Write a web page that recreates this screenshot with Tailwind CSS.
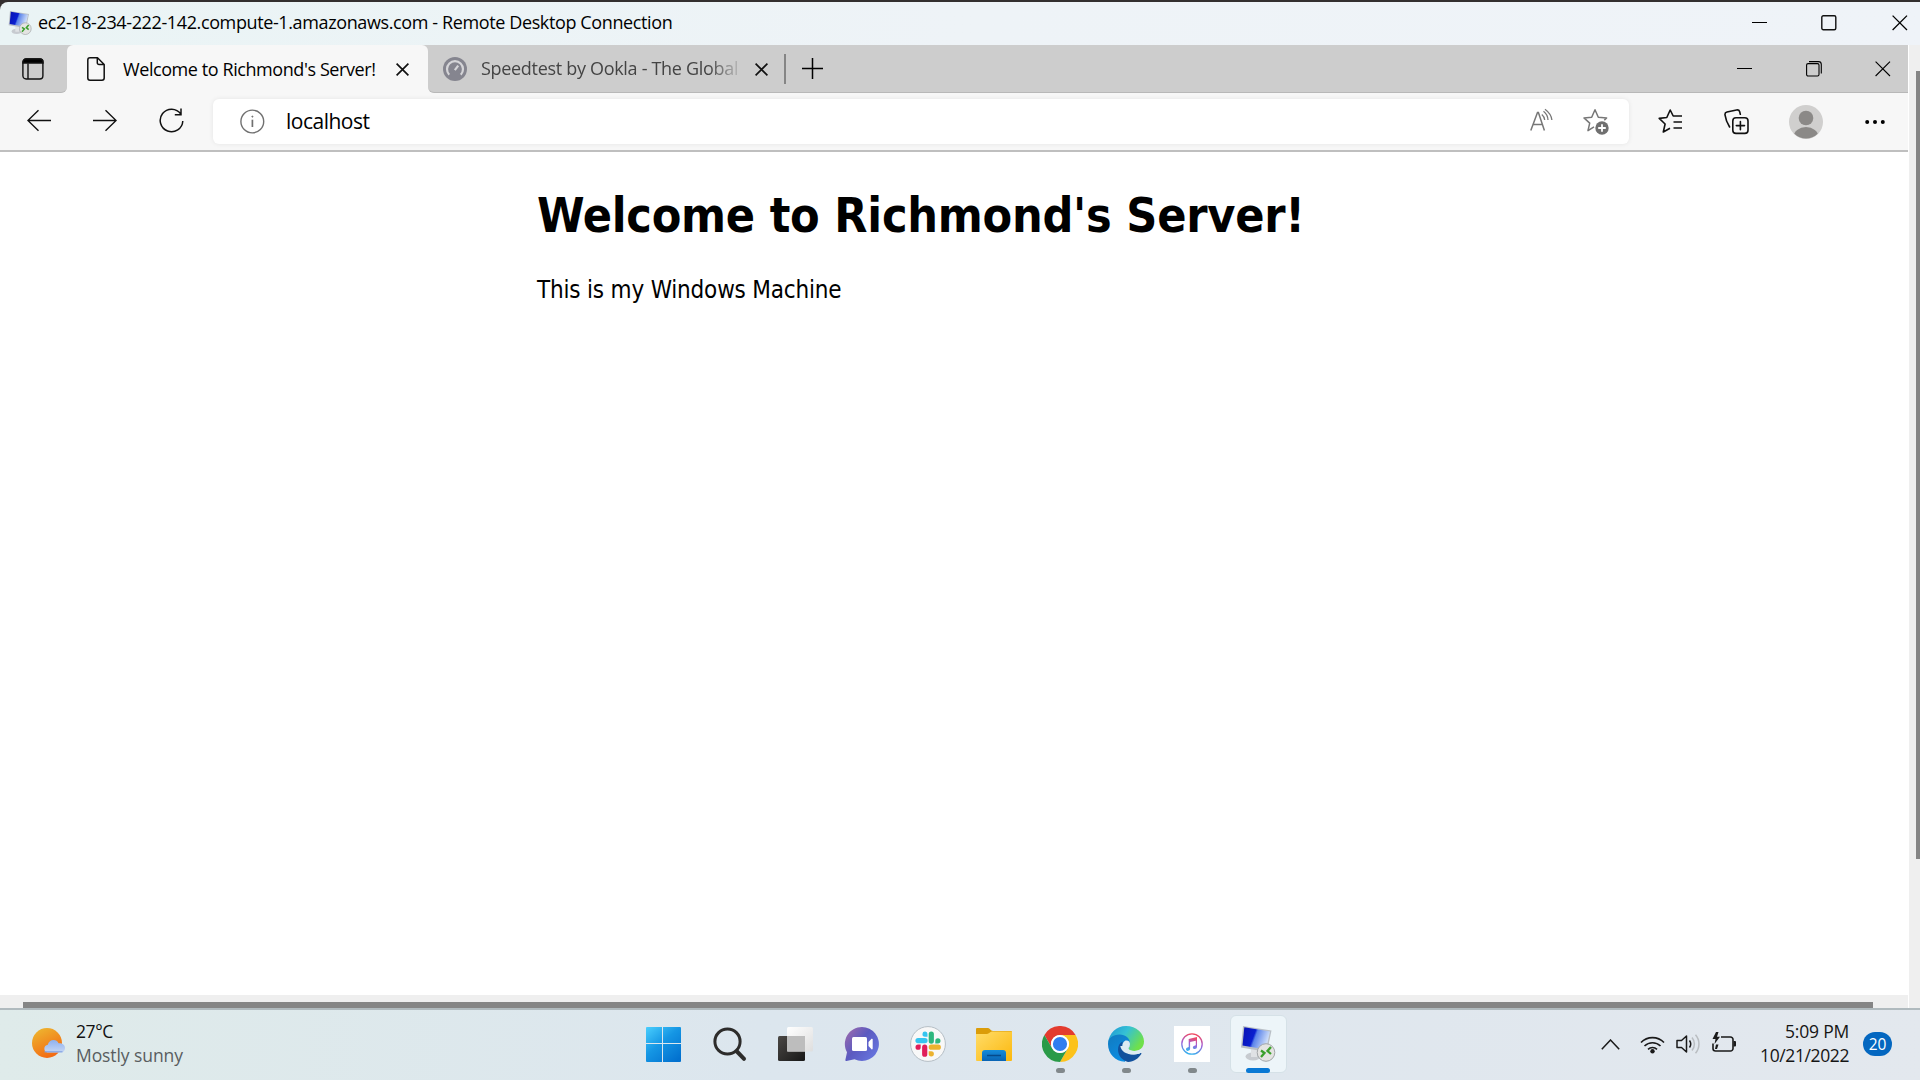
<!DOCTYPE html>
<html lang="en">
<head>
<meta charset="utf-8">
<title>Remote Desktop Connection</title>
<script src="https://cdn.jsdelivr.net/npm/@tailwindcss/browser@4"></script>
</head>
<body class="w-[1920px] h-[1080px] overflow-hidden bg-[#332f2f] font-['Open_Sans','Noto_Sans',sans-serif] text-black">
<div class="flex flex-col w-full h-full pt-[2px]">

  <!-- Remote desktop title bar -->
  <header class="flex items-center h-[43px] shrink-0 pl-[8px] pb-[2px] rounded-tl-lg bg-linear-to-r from-[#eaf4f5] via-[#eef3f7] to-[#eff3f8]">
    <svg class="w-6 h-6 shrink-0" viewBox="0 0 36 36"><use href="#rdp"/></svg>
    <span class="ml-[6px] pb-px text-[18px] leading-6 tracking-[-0.38px] whitespace-nowrap">ec2-18-234-222-142.compute-1.amazonaws.com - Remote Desktop Connection</span>
    <div class="flex items-center ml-auto mr-[12px]">
      <svg class="w-4 h-4" viewBox="0 0 16 16" fill="none" stroke="#000"><path d="M0 7.500H15"/></svg>
      <svg class="ml-[53px] w-4 h-4" viewBox="0 0 16 16" fill="none" stroke="#111" stroke-width="1.4"><rect x=".8" y=".8" width="14" height="14" rx="1.5"/></svg>
      <svg class="ml-[55px] w-4 h-4" viewBox="0 0 16 16" fill="none" stroke="#000" stroke-width="1.3"><path d="M.6.6 15 15M15 .6.6 15"/></svg>
    </div>
  </header>

  <div class="flex h-[963px] shrink-0 bg-[#efefef]">
    <div class="flex flex-col w-[1908px]">
      <!-- Tab strip -->
      <div class="flex h-12 shrink-0 bg-[#f7f7f7]">
        <div class="flex items-center w-[67px] pl-[22px] bg-[#cdcdcd] border-b border-[#b8b8b8] rounded-br-md">
          <svg class="w-[22px] h-[22px]" viewBox="0 0 22 22" fill="none" stroke="#111" stroke-width="1.4"><rect x=".9" y="1" width="20" height="20" rx="3.2"/><path d="M1 5V4a3 3 0 0 1 3-3h14a3 3 0 0 1 3 3v1z" fill="#000"/><path d="M6 5.500V21"/></svg>
        </div>
        <div class="bg-[#cdcdcd]">
          <div class="flex items-center w-[361px] h-12 pl-5 rounded-t-md bg-[#f7f7f7]">
            <svg class="w-[18px] h-6" viewBox="0 0 18 24" fill="none" stroke="#111" stroke-width="1.5" stroke-linejoin="round"><path d="M3 .8h7.500l6.700 6.700V21a2.200 2.200 0 0 1-2.200 2.200H3A2.200 2.200 0 0 1 .8 21V3A2.200 2.200 0 0 1 3 .8zM10.300.8v5a1.700 1.700 0 0 0 1.700 1.700h5.200"/></svg>
            <span class="ml-[18px] w-[255px] pb-px text-[18px] leading-6 tracking-[-0.42px] whitespace-nowrap">Welcome to Richmond's Server!</span>
            <svg class="ml-[18px] w-[13px] h-[13px] mt-px" viewBox="0 0 13 13" fill="none" stroke="#111" stroke-width="1.700"><path d="M.6.6l11.800 11.800M12.400.6.6 12.400"/></svg>
          </div>
        </div>
        <div class="flex grow items-center pl-[15px] bg-[#cdcdcd] border-b border-[#b8b8b8] rounded-bl-md">
          <svg class="w-6 h-6" viewBox="0 0 24 24"><circle cx="12" cy="12" r="12" fill="#85858f"/><path d="M6.200 17.700a8 8 0 1 1 11.600 0" fill="none" stroke="#d5d5d8" stroke-width="2.200"/><path d="M11.800 13.200 15.200 8.600" stroke="#d5d5d8" stroke-width="2.200"/></svg>
          <span class="ml-[14px] w-[258px] pb-px text-[18px] leading-6 tracking-[-0.31px] whitespace-nowrap text-[#444] mask-r-from-[88%] mask-r-to-[102%]">Speedtest by Ookla - The Global</span>
          <svg class="ml-4 w-[13px] h-[13px] mt-px" viewBox="0 0 13 13" fill="none" stroke="#111" stroke-width="1.700"><path d="M.6.6l11.800 11.800M12.400.6.6 12.400"/></svg>
          <div class="ml-[16px] w-[2px] h-[30px] bg-[#858585]"></div>
          <svg class="ml-4 w-[21px] h-[21px]" viewBox="0 0 21 21" stroke="#000" stroke-width="1.500"><path d="M10.500 0v21M0 10.500h21"/></svg>
          <div class="flex items-center ml-auto mr-[17px] gap-[53px]">
            <svg class="w-4 h-4" viewBox="0 0 16 16" stroke="#000"><path d="M0 7.500h15"/></svg>
            <svg class="w-4 h-4" viewBox="0 0 16 16" fill="none" stroke="#000" stroke-width="1.100"><rect x=".6" y="2.600" width="12.400" height="12.400" rx="1.500"/><path d="M3 .6h9.500a2.800 2.800 0 0 1 2.800 2.800V12.600"/></svg>
            <svg class="w-4 h-4" viewBox="0 0 16 16" stroke="#000" stroke-width="1.100"><path d="M.6.6 15 15M15 .6.6 15"/></svg>
          </div>
        </div>
      </div>

      <!-- Toolbar -->
      <div class="flex items-center h-[59px] shrink-0 pl-[27px] bg-[#f7f7f7] border-b-2 border-[#bfbfbf]">
        <svg class="w-6 h-6 mb-[2px]" viewBox="0 0 24 24" fill="none" stroke="#111" stroke-width="1.400"><path d="M24 11.500H.8M11.500 1.200.9 11.500l10.600 10.300"/></svg>
        <svg class="ml-[42px] w-6 h-6 mb-[2px]" viewBox="0 0 24 24" fill="none" stroke="#111" stroke-width="1.400"><path d="M0 11.500h23.200M12.500 1.200l10.600 10.300-10.600 10.300"/></svg>
        <svg class="ml-[42px] w-[25px] h-[26px] mb-px" viewBox="0 0 25 26" fill="none" stroke="#111" stroke-width="1.500"><path d="M21.800 6A11.300 11.300 0 1 0 23.800 13M22 .5v6.200h-6.200"/></svg>
        <div class="flex items-center ml-[29px] w-[1416px] h-[45px] pl-[27px] pr-[20px] rounded-md bg-white shadow-[0_0_5px_rgba(0,0,0,0.08)]">
          <svg class="w-[25px] h-[25px]" viewBox="0 0 25 25" fill="none" stroke="#707070" stroke-width="1.400"><circle cx="12.300" cy="12.500" r="11.400"/><path d="M12.400 10.700v7.300" stroke-width="1.700"/><circle cx="12.400" cy="7.600" r=".6" fill="#707070" stroke-width=".8"/></svg>
          <span class="ml-[21px] pb-[2px] text-[21px] leading-7 tracking-[-0.5px] whitespace-nowrap">localhost</span>
          <svg class="ml-auto w-[23px] h-[24px] mb-[3px]" viewBox="0 0 23 24" fill="none" stroke="#777" stroke-width="1.500"><path d="M.8 22.500 7.500 4.500h.9l6 18M3.200 16.500h9.300"/><path d="M11.800 6.500c1.800 1.500 2.700 3.300 2.900 5.500M13.500 3.300c2.800 2.200 4.300 5 4.500 8.700M15 1.200c4 3 6.500 6.500 6.900 10.800" stroke-width="1.300"/></svg>
          <svg class="ml-[30px] w-[26px] h-[27px]" viewBox="0 0 26 27" fill="none" stroke="#777" stroke-width="1.500" stroke-linejoin="round"><path d="M11 18.800 5 22.700l1.700-7.600L1 9.900l7.700-.7L12 1.800l3.300 7.400 8.300.7-2.300 2.300"/><circle cx="19" cy="20" r="6.700" fill="#707070" stroke="none"/><path d="M19 16.200v7.600M15.200 20h7.600" stroke="#fff" stroke-width="1.800"/></svg>
        </div>
        <svg class="ml-[29px] w-[25px] h-[26px] mb-px" viewBox="0 0 25 26" fill="none" stroke="#111" stroke-width="1.600" stroke-linejoin="round"><path d="M12 20.200 5.300 24l1.800-8L1.200 10.400l7.600-.9L12.200 2l3 6H24M15.500 14H24M15.500 20H24"/></svg>
        <svg class="ml-[41px] w-[25px] h-[26px]" viewBox="0 0 25 26" fill="none" stroke="#111" stroke-width="1.600" stroke-linecap="round"><rect x="8.800" y="8.800" width="15.200" height="15.600" rx="3.200"/><path d="M16.400 12.500v8.200M12.300 16.600h8.200M5.600 18C3.500 14.500 1.500 9.500 1 5.800c-.2-1.600.5-2.400 2-2.800L12.500 1c1.500-.3 2.700.2 3.200 1.800l.6 2.500"/></svg>
        <svg class="ml-[40px] w-[34px] h-[34px]" viewBox="0 0 34 34"><defs><clipPath id="pc"><circle cx="17" cy="17" r="16.500"/></clipPath></defs><circle cx="17" cy="17" r="17" fill="#d0cfce"/><circle cx="17" cy="13" r="7.300" fill="#8b8987"/><ellipse cx="17" cy="32" rx="12.500" ry="10" fill="#8b8987" clip-path="url(#pc)"/></svg>
        <svg class="ml-[42px] w-5 h-2" viewBox="0 0 20 8"><circle cx="2.200" cy="4" r="2"/><circle cx="10" cy="4" r="2"/><circle cx="17.800" cy="4" r="2"/></svg>
      </div>

      <!-- Web page -->
      <main class="grow pt-[34px] pl-[537px] bg-white font-['DejaVu_Sans_Condensed','DejaVu_Sans',sans-serif] [font-stretch:75%]">
        <h1 class="w-fit text-[48px] leading-[58px] font-bold tracking-[-0.24px] whitespace-nowrap">Welcome to Richmond's Server!</h1>
        <p class="w-fit mt-8 text-2xl leading-[29px] tracking-[-0.19px] whitespace-nowrap">This is my Windows Machine</p>
      </main>
      <!-- Horizontal scrollbar -->
      <div class="flex items-end h-[13px] shrink-0 pl-[23px] bg-[#efefef]"><div class="w-[1850px] h-[6px] bg-[#858585]"></div></div>
    </div>
    <!-- Vertical scrollbar -->
    <div class="flex grow justify-end pt-[26px] border-l border-white"><div class="w-1 h-[788px] bg-[#858585]"></div></div>
  </div>

  <!-- Taskbar -->
  <footer class="flex items-center h-[72px] shrink-0 pb-[2px] border-t-2 border-[#b0babe] bg-linear-to-r from-[#dfebea] via-[#dce6ee] via-40% to-[#e3e8ee]">
    <div class="flex items-center w-[630px] pl-8">
      <svg class="w-[34px] h-[31px] mb-px" viewBox="0 0 34 31"><defs><linearGradient id="sun" x1="0" y1="0" x2=".5" y2="1"><stop stop-color="#edbc32"/><stop offset="1" stop-color="#f36c13"/></linearGradient><linearGradient id="cl" x1="0" y1="0" x2="0" y2="1"><stop stop-color="#8fb1ee"/><stop offset="1" stop-color="#c6d7f5"/></linearGradient></defs><circle cx="15" cy="15" r="15" fill="url(#sun)"/><path d="M15.500 24.500a3.900 3.900 0 0 1 .3-7.700c1-5.400 8.500-6.500 10.800-1.600 3.500-.3 6.400 1.500 6.400 4.800 0 3-2 4.500-4.500 4.500z" fill="url(#cl)"/><path d="M12.500 23.800h18" stroke="#82a3e3" stroke-width="1.200"/></svg>
      <div class="ml-[10px] pb-[2px] text-[17.500px] leading-6 tracking-[-0.08px]">
        <div class="w-fit whitespace-nowrap text-[#111] tracking-[-0.4px]">27°C</div>
        <div class="w-fit whitespace-nowrap text-[#595d5f]">Mostly sunny</div>
      </div>
    </div>

    <nav class="grid grid-cols-[repeat(10,66px)] h-[68px] items-center justify-items-center">
      <svg class="w-9 h-9" viewBox="0 0 36 36"><defs><linearGradient id="win" gradientUnits="userSpaceOnUse" x1="0" y1="0" x2="30" y2="36"><stop stop-color="#4dd2ff"/><stop offset=".5" stop-color="#1596e4"/><stop offset="1" stop-color="#0271cf"/></linearGradient></defs><path fill="url(#win)" d="M2 1h15v16H1V2a1 1 0 0 1 1-1zM18 1h17a1 1 0 0 1 1 1v15H18zM1 18h16v18H2a1 1 0 0 1-1-1zM18 18h18v17a1 1 0 0 1-1 1H18z"/></svg>
      <svg class="w-9 h-9" viewBox="0 0 36 36" fill="none" stroke="#2d2c2b" stroke-linecap="round"><circle cx="16.500" cy="15.500" r="12.600" stroke-width="3"/><path d="m26 25.500 7 7.300" stroke-width="4"/></svg>
      <svg class="w-9 h-9" viewBox="0 0 36 36"><defs><linearGradient id="tv" x1="0" y1="0" x2="1" y2="1"><stop stop-color="#4b4845"/><stop offset="1" stop-color="#171717"/></linearGradient><linearGradient id="tw" x1="0" y1="0" x2="1" y2="1"><stop stop-color="#fff"/><stop offset="1" stop-color="#dedede"/></linearGradient></defs><rect x="1" y="10" width="27" height="25" rx="1.500" fill="url(#tv)"/><rect x="10" y="1" width="26" height="24.500" rx="1.500" fill="url(#tw)"/><path d="M10 10h18v15.500H10z" fill="#bdbdbd"/></svg>
      <svg class="ml-px w-9 h-9" viewBox="0 0 36 36"><defs><linearGradient id="ch" x1="0" y1=".1" x2=".9" y2=".8"><stop stop-color="#9f6bac"/><stop offset=".5" stop-color="#5b5ac0"/><stop offset="1" stop-color="#6673dc"/></linearGradient></defs><path d="M18 1a17 17 0 1 1-7.500 32.300L2.500 35c-1 .2-1.300-.4-1.100-1.200L3 26.300A17 17 0 0 1 18 1z" fill="url(#ch)"/><rect x="8" y="11" width="15" height="14" rx="1.500" fill="#fff"/><path d="m24.500 16 3-3.200c.8-.4 1.200 0 1.200.6v9.200c0 .7-.5 1-1.200.6l-3-3.200z" fill="#fff"/></svg>
      <svg class="ml-[2px] w-9 h-9" viewBox="0 0 36 36"><circle cx="18" cy="18" r="17.400" fill="#f8f8f8" stroke="#b5bec5"/><path fill="#36c5f0" d="M15.200 5.500a2.600 2.600 0 0 1 2.300 2.600v2.600h-2.600a2.600 2.600 0 0 1 .3-5.200zM8 12h7a2.600 2.600 0 0 1 0 5.200H8A2.600 2.600 0 0 1 8 12z"/><path fill="#2eb67d" d="M18.700 8.100a2.600 2.600 0 0 1 5.200 0v7a2.600 2.600 0 0 1-5.200 0zM25.300 17.400v-2.600a2.600 2.600 0 1 1 2.600 2.600z"/><path fill="#e01e5a" d="M10.700 18.600v2.600a2.600 2.600 0 1 1-2.600-2.600zM12.100 21.200a2.600 2.600 0 0 1 5.200 0v7a2.600 2.600 0 0 1-5.200 0z"/><path fill="#ecb22e" d="M21.300 18.600h7a2.600 2.600 0 0 1 0 5.200h-7a2.600 2.600 0 0 1 0-5.200zM18.700 25.200h2.600a2.600 2.600 0 1 1-2.600 2.600z"/></svg>
      <svg class="ml-[2px] w-9 h-9" viewBox="0 0 36 36"><defs><linearGradient id="fo" x1="0" y1="0" x2="1" y2="1"><stop stop-color="#ffdc69"/><stop offset="1" stop-color="#fcb80d"/></linearGradient><linearGradient id="fb" x1="0" y1="0" x2="0" y2="1"><stop stop-color="#158cda"/><stop offset="1" stop-color="#0a64b4"/></linearGradient></defs><path fill="#db9c09" d="M1 2h11c2 0 2.500 3 5 3h18a1 1 0 0 1 1 1v6H0V3a1 1 0 0 1 1-1z"/><path fill="url(#fo)" d="M0 8h11c2 0 3-2.500 5-2.500h20v28.500a1 1 0 0 1-1 1H1a1 1 0 0 1-1-1z"/><path fill="url(#fb)" d="M6 35v-8a3 3 0 0 1 3-3h18a3 3 0 0 1 3 3v8z"/><path d="M11 29.500h14" stroke="#064a8a" stroke-width="1.500"/></svg>
      <div class="relative flex items-center justify-center w-full h-[68px] pl-[2px]">
        <svg class="w-9 h-9" viewBox="0 0 36 36"><path fill="#e33b2e" d="M2.400 9A18 18 0 0 1 33.600 9H18a9 9 0 0 0-7.800 13.500z"/><path fill="#fcc21b" d="M33.600 9A18 18 0 0 1 18 36l7.800-13.500A9 9 0 0 0 18 9z"/><path fill="#2a9a48" d="M18 36A18 18 0 0 1 2.400 9l7.800 13.500A9 9 0 0 0 25.800 22.500z"/><circle cx="18" cy="18" r="9" fill="#fff"/><circle cx="18" cy="18" r="7.100" fill="#2f7df0"/></svg>
        <div class="absolute bottom-[5px] w-[9px] h-[5px] rounded-full bg-[#81888b]"></div>
      </div>
      <div class="relative flex items-center justify-center w-full h-[68px] pl-[2px]">
        <svg class="w-9 h-9" viewBox="0 0 36 36"><defs><linearGradient id="e1" x1="0" y1="0" x2="1" y2=".5"><stop stop-color="#1c93d4"/><stop offset=".5" stop-color="#35c1d5"/><stop offset="1" stop-color="#6fe04b"/></linearGradient><linearGradient id="e2" x1="0" y1="0" x2=".6" y2="1"><stop stop-color="#127abf"/><stop offset="1" stop-color="#0c8ee4"/></linearGradient></defs><path fill="url(#e1)" d="M0 17C1 7 8.500 0 18 0c10.500 0 18 7.500 18 15.500 0 6-4.500 9.500-9.500 9.500-4 0-6.200-1.500-6-2.500.5-1.200 1.500-2 1.500-4.500 0-5-5-8-10.500-8C6 10 2 12.500 0 17z"/><path fill="url(#e2)" d="M0 18C0 12 5 8.500 11.500 8.500 17.500 8.500 22 12 22 17.500c0 1.500-.5 2.800-1.200 3.800l-3.800 14.500C7 35.500 0 27.500 0 18z"/><path fill="#11519d" d="M14.500 15.500C11.500 17 10 20 10 23.500 10 30 14.500 34.500 20 36c6-.5 10.500-3.500 13.300-8 .4-.8-.2-1.300-1-.9-2 1-4 1.400-6.300 1.400-7 0-12-4.500-11.500-13z"/><path fill="#dcebf2" d="M14.300 20a6.500 6.500 0 0 1 3.200-5.500c3-.5 4.500 1.200 4.500 3.500 0 2.500-1.500 3.300-1.500 4.500 0 1.500 2.500 2.500 6 2.500 3 0 5.200-1 7-2.300l1.300 2-3 2.800c-8 2.500-18.300.5-19.500-7.500z"/></svg>
        <div class="absolute bottom-[5px] w-[9px] h-[5px] rounded-full bg-[#81888b]"></div>
      </div>
      <div class="relative flex items-center justify-center w-full h-[68px] pl-[2px]">
        <svg class="w-9 h-9" viewBox="0 0 36 36"><defs><linearGradient id="it" x1=".6" y1="0" x2=".4" y2="1"><stop stop-color="#f3475c"/><stop offset=".5" stop-color="#a05fd8"/><stop offset="1" stop-color="#35b2ee"/></linearGradient></defs><path fill="#fff" d="M0 0h36v36H0z"/><circle cx="18" cy="18" r="10.200" fill="none" stroke="url(#it)" stroke-width="1.300"/><path fill="url(#it)" d="M14.700 13 23 11v9.800c0 1.500-1 2.200-2.200 2.300-2.400.2-2.600-3-.3-3.300 1-.2 1.300-.3 1.300-1v-4l-5.700 1.300v6.500c0 1.400-1 2.200-2.200 2.300-2.400.2-2.600-3-.3-3.300.8-.2 1.100-.3 1.100-1z"/></svg>
        <div class="absolute bottom-[5px] w-[9px] h-[5px] rounded-full bg-[#81888b]"></div>
      </div>
      <div class="relative flex items-center justify-center ml-[2px] w-[57px] h-[58px] rounded-md bg-[#edf5f9] border border-[#d5e1e7]">
        <svg class="w-9 h-9" viewBox="0 0 36 36"><defs>
          <linearGradient id="scr" x1="0" y1=".2" x2="1" y2=".5"><stop stop-color="#0913b5"/><stop offset=".42" stop-color="#0a1fd0"/><stop offset=".5" stop-color="#5c84ea"/><stop offset="1" stop-color="#dce9fb"/></linearGradient>
          <g id="rdp"><ellipse cx="13" cy="30.500" rx="7.500" ry="4" fill="#c7cbd0"/><path d="m11 23 7 1-1 7h-6z" fill="#dfe2e5"/><path d="M3 0l28.500 4.500L27 26 1 21.500z" fill="#b9bfc6"/><path d="M4.300 1.300 30 5.500 26 23.500 2.500 19.500z" fill="url(#scr)"/><circle cx="26" cy="26.500" r="8.800" fill="#e4e4e2" stroke="#a2a6a8"/><path d="m21 24.500 3.500 2.500-3.500 4M31 21l-3.500 4 3.500 3" fill="none" stroke="#3ba02c" stroke-width="2.300"/></g></defs><use href="#rdp"/></svg>
        <div class="absolute -bottom-[1px] w-6 h-[5px] rounded-full bg-[#0a79d4]"></div>
      </div>
    </nav>

    <!-- System tray -->
    <div class="flex grow items-center justify-end pr-[28px]">
      <svg class="w-[19px] h-[11px]" viewBox="0 0 19 11" fill="none" stroke="#1a1a1a" stroke-width="1.500"><path d="M.8 10.200 9.500 1l8.700 9.200"/></svg>
      <svg class="ml-5 w-[25px] h-[19px]" viewBox="0 0 25 19" fill="none" stroke="#1a1a1a" stroke-width="1.600"><path d="M1 7.500a16 16 0 0 1 23 0M4.500 11a11.300 11.300 0 0 1 16 0M8 14.300a6.500 6.500 0 0 1 9 0"/><circle cx="12.500" cy="16.300" r="2.200" fill="#1a1a1a" stroke="none"/></svg>
      <svg class="ml-[11px] w-[25px] h-5" viewBox="0 0 25 20" fill="none" stroke="#1a1a1a" stroke-width="1.500" stroke-linejoin="round"><path d="M1 6.500h4.500L10.500 2v16l-5-4.500H1zM13.500 6.500a6 6 0 0 1 0 7"/><path d="M16 3.500a10 10 0 0 1 0 13M19.500.8a14 14 0 0 1 0 18.400" stroke="#b9bdc1"/></svg>
      <svg class="ml-[11px] w-[25px] h-[21px] mb-1" viewBox="0 0 25 21" fill="none" stroke="#1a1a1a" stroke-width="1.600"><path d="M9 5h9.500A2.500 2.500 0 0 1 21 7.500v9a2.500 2.500 0 0 1-2.500 2.500h-15A2.500 2.500 0 0 1 1 16.500v-5"/><path d="M21.500 9h1.500a1 1 0 0 1 1 1v3.500a1 1 0 0 1-1 1h-1.500z" fill="#1a1a1a" stroke="none"/><path d="M4 0 .5 7h3L2.500 12 8 4.700H5L6.500 0zM4 12.500h2.500L5 17H3z" fill="#1a1a1a" stroke="none"/></svg>
      <div class="flex flex-col items-end ml-[23px] pb-[2px] text-[17.500px] leading-6 text-[#151515] whitespace-nowrap">
        <span class="tracking-[-0.2px]">5:09 PM</span><span class="tracking-[-0.4px]">10/21/2022</span>
      </div>
      <div class="flex items-center justify-center ml-[14px] w-[29px] h-6 rounded-full bg-[#0467c0] text-white text-[15.500px] leading-6 pb-px">20</div>
    </div>
  </footer>
</div>
</body>
</html>
